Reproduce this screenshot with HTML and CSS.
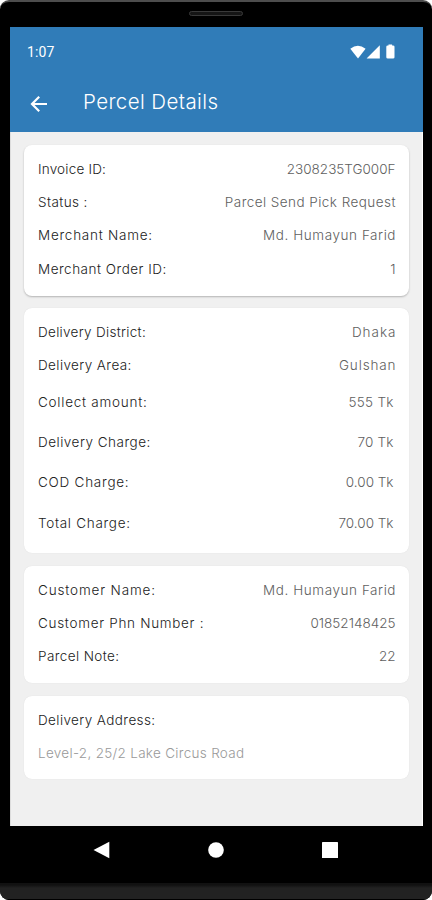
FILE: index.html
```html
<!DOCTYPE html>
<html lang="en">
<head>
<meta charset="utf-8">
<title>Percel Details</title>
<link rel="stylesheet" href="styles.css">
</head>
<body>
<div class="phone">
  <div class="speaker-bar"><span class="speaker"></span></div>
  <div class="screen">
    <header class="header">
      <div class="status-bar">
        <span class="time">1:07</span>
        <svg class="status-icons" width="46" height="16" viewBox="0 0 46 16" fill="#fff">
          <path d="M.3 4.7Q7.8-1.1 15.6 4.7L8 14.5Z"/>
          <path d="M29.8 1.2V14.5H16.6Z"/>
          <path d="M38.5 1.5V.5h3.6v1H43q1.5 0 1.5 1.2v10.6q0 1.2-1.5 1.2h-5.2q-1.5 0-1.5-1.2V2.7q0-1.2 1.5-1.2z"/>
        </svg>
      </div>
      <div class="title-bar">
        <svg class="back" width="18" height="18" viewBox="0 0 18 18" fill="none" stroke="#fff" stroke-width="2.2"><path d="M17 9H2M9.2 1.8L2 9l7.2 7.2"/></svg>
        <h1 class="title">Percel Details</h1>
      </div>
    </header>
    <main class="content">
      <section class="card raised">
        <div class="row"><span class="label ls-20">Invoice ID:</span><span class="value">2308235TG000F</span></div>
        <div class="row"><span class="label ls-40">Status :</span><span class="value ls-45">Parcel Send Pick Request</span></div>
        <div class="row"><span class="label ls-75">Merchant Name:</span><span class="value ls-57">Md. Humayun Farid</span></div>
        <div class="row"><span class="label ls-50">Merchant Order ID:</span><span class="value">1</span></div>
      </section>
      <section class="card charges">
        <div class="row"><span class="label ls-30">Delivery District:</span><span class="value ls-100">Dhaka</span></div>
        <div class="row"><span class="label ls-40">Delivery Area:</span><span class="value ls-85">Gulshan</span></div>
        <div class="row amount"><span class="label ls-75">Collect amount:</span><span class="value ls-30">555 Tk</span></div>
        <div class="row amount"><span class="label ls-50">Delivery Charge:</span><span class="value ls-20">70 Tk</span></div>
        <div class="row amount"><span class="label ls-75">COD Charge:</span><span class="value">0.00 Tk</span></div>
        <div class="row amount"><span class="label ls-70">Total Charge:</span><span class="value">70.00 Tk</span></div>
      </section>
      <section class="card customer">
        <div class="row"><span class="label ls-85">Customer Name:</span><span class="value ls-57">Md. Humayun Farid</span></div>
        <div class="row"><span class="label ls-70">Customer Phn Number :</span><span class="value">01852148425</span></div>
        <div class="row"><span class="label ls-40">Parcel Note:</span><span class="value">22</span></div>
      </section>
      <section class="card address">
        <div class="row"><span class="label ls-40">Delivery Address:</span></div>
        <div class="row"><span class="value muted ls-30">Level-2, 25/2 Lake Circus Road</span></div>
      </section>
    </main>
  </div>
  <nav class="nav">
    <svg width="17" height="18" viewBox="0 0 17 18" fill="#fff"><path d="M.5 9L16.3.8V17.2Z"/></svg>
    <svg width="16" height="16" viewBox="0 0 16 16" fill="#fff"><circle cx="8" cy="8" r="7.8"/></svg>
    <svg width="16" height="16" viewBox="0 0 16 16" fill="#fff"><rect width="16" height="16" rx=".6"/></svg>
  </nav>
  <div class="chin"></div>
</div>
</body>
</html>
```
FILE: styles.css
```css
* { box-sizing: border-box; }
body { margin: 0; background: #fff; font-family: Inter, "Liberation Sans", sans-serif; }
.phone {
  width: 432px; height: 900px; display: flex; flex-direction: column;
  background: #000; border-top: 2px solid #4d4d4d; border-radius: 9px; overflow: hidden;
}
.speaker-bar { height: 25px; flex: none; display: flex; justify-content: center; padding-top: 9px; }
.speaker { width: 54px; height: 5px; border: 1px solid #393939; border-radius: 3px; background: #151515; }
.screen { height: 799px; flex: none; margin: 0 9px 0 10px; background: #f0f0f0; display: flex; flex-direction: column; border-right: 1px solid #fff; border-left: 1px solid #ddd; }
.header { height: 105px; flex: none; background: #307cb8; color: #fff; margin: 0 -1px; padding: 16px 27px 0 17px; }
.status-bar { display: flex; justify-content: space-between; height: 18px; align-items: center; }
.time { font: 400 14px Roboto, sans-serif; letter-spacing: .1px; }
.title-bar { display: flex; align-items: center; height: 30px; margin-top: 28px; padding-left: 3px; }
.title { margin: -4px 0 0 35px; font-size: 20.5px; font-weight: 300; line-height: 30px; letter-spacing: .4px; }
.content { padding: 13px 13px 0 13px; display: flex; flex-direction: column; gap: 12px; }
.card { background: #fff; border-radius: 8px; height: 151px; padding: 7.5px 13.5px 0 14px; box-shadow: 0 0 1px rgba(0,0,0,.12); }
.raised { box-shadow: 0 1px 2px rgba(0,0,0,.25); }
.charges { height: 245px; padding-top: 7px; }
.customer { height: 117px; margin-top: 1px; padding-top: 7.4px; }
.address { height: 83px; margin-top: 1px; padding-top: 7px; }
.row { display: flex; justify-content: space-between; align-items: center; height: 33.2px; font-size: 13.5px; font-weight: 300; white-space: nowrap; }
.amount { height: 40.4px; padding-right: 2px; }
.label, .value { --ls: 0px; letter-spacing: var(--ls); }
.label { color: #222; }
.value { color: #606060; margin-right: calc(0px - var(--ls)); }
.muted { color: #999; }
.ls-20 { --ls: .2px; }
.ls-30 { --ls: .3px; }
.ls-40 { --ls: .4px; }
.ls-45 { --ls: .45px; }
.ls-50 { --ls: .5px; }
.ls-57 { --ls: .57px; }
.ls-70 { --ls: .7px; }
.ls-75 { --ls: .75px; }
.ls-85 { --ls: .85px; }
.ls-100 { --ls: 1px; }
.nav { height: 57px; flex: none; display: flex; align-items: center; justify-content: space-between; padding: 0 94px 10px 93px; }
.chin { flex: 1; background: linear-gradient(#111 0 2px, #222 5px); border-bottom: 1px solid #000; }
```
